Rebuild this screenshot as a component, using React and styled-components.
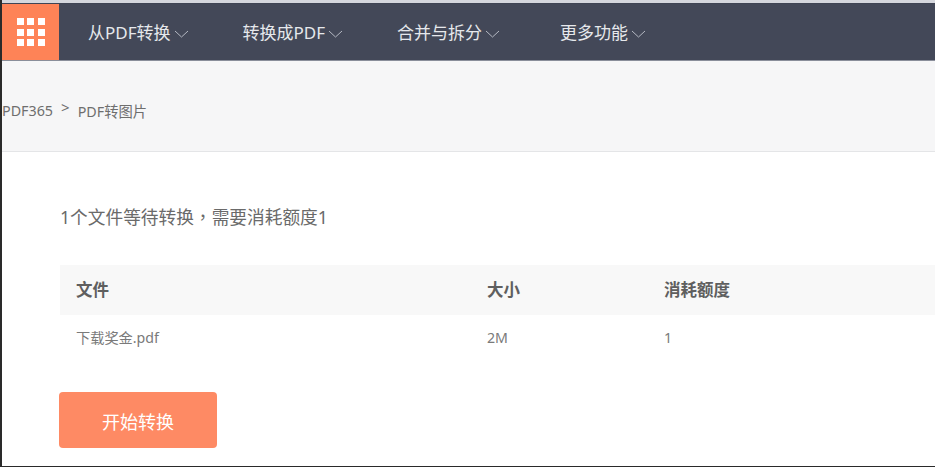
import React from 'react'
import styled, { createGlobalStyle } from 'styled-components'

const FONT = `"Noto Sans", "Noto Sans CJK SC", sans-serif`

const GlobalStyle = createGlobalStyle`
  html, body {
    margin: 0;
    padding: 0;
    background: #fff;
    overflow: hidden;
  }
  * {
    box-sizing: border-box;
  }
`

const Page = styled.div`
  width: 935px;
  height: 467px;
  padding-top: 3px;
  background: #fff;
  border-left: 2px solid #2a2a2a;
  border-bottom: 1px solid #2a2a2a;
  box-shadow: inset 0 3px 0 #d5d7dd;
  font-family: ${FONT};
  overflow: hidden;
`

const Nav = styled.nav`
  display: flex;
  height: 58px;
  background: #434858;
  border-top: 1px solid #3f4454;
  border-bottom: 1px solid #8a8e9a;
`

const AppsButton = styled.div`
  display: grid;
  grid-template-columns: repeat(3, 7px);
  grid-auto-rows: 7px;
  gap: 3.5px;
  align-content: center;
  justify-content: center;
  width: 57px;
  background: #fe8357;
`

const Dot = styled.span`
  background: #fff;
`

const NavItem = styled.div`
  display: flex;
  align-items: center;
  gap: 3px;
  margin-left: ${p => p.$left}px;
  padding-bottom: 2px;
  color: #e6e8ec;
  font-size: 17px;
  white-space: nowrap;
`

const Crumbs = styled.div`
  display: flex;
  align-items: center;
  height: 91px;
  padding-top: 8px;
  background: #f6f6f7;
  border-bottom: 1px solid #e4e5e7;
  color: #6e6e6e;
  font-size: 14.3px;
`

const CrumbSep = styled.span`
  margin: -7px 8px 0 8px;
  font-size: 15px;
`

const Content = styled.main`
  padding: 52px 0 0 58px;
`

const Summary = styled.div`
  height: 24px;
  margin-bottom: 37px;
  color: #6a6a6a;
  font-size: 17.7px;
  line-height: 24px;
`

const Comma = styled.span`
  font-family: "Noto Sans CJK TC", sans-serif;
`

const Row = styled.div`
  display: grid;
  grid-template-columns: 411px 177px 1fr;
  align-items: center;
  height: ${p => (p.$head ? 50 : 48)}px;
  padding: ${p => (p.$head ? '0 0 2px 16px' : '0 0 4px 16px')};
  background: ${p => (p.$head ? '#f8f8f8' : '#fff')};
  color: ${p => (p.$head ? '#5f5f5f' : '#7a7a7a')};
  font-size: ${p => (p.$head ? 16.5 : 14.2)}px;
  font-weight: ${p => (p.$head ? 700 : 400)};
`

const StartButton = styled.button`
  display: block;
  width: 158px;
  height: 56px;
  margin: 29px 0 0 -1px;
  padding: 2px 0 0;
  border: 0;
  border-radius: 4px;
  background: #fe8a64;
  color: #fff;
  font-family: ${FONT};
  font-size: 18px;
`

const Chevron = () => (
  <svg width='15' height='8' viewBox='0 0 15 8' fill='none' style={{ marginTop: 5 }}>
    <path d='M1 1l6.5 6 6.5-6' stroke='#b4b8c2' strokeWidth='1' />
  </svg>
)

const MENU = [
  { label: '从PDF转换', left: 29 },
  { label: '转换成PDF', left: 54 },
  { label: '合并与拆分', left: 54 },
  { label: '更多功能', left: 60 }
]

export default function App () {
  return (
    <Page>
      <GlobalStyle />
      <Nav>
        <AppsButton>
          {Array.from({ length: 9 }).map((_, i) => <Dot key={i} />)}
        </AppsButton>
        {MENU.map(item => (
          <NavItem key={item.label} $left={item.left}>
            {item.label}
            <Chevron />
          </NavItem>
        ))}
      </Nav>
      <Crumbs>
        PDF365
        <CrumbSep>&gt;</CrumbSep>
        PDF转图片
      </Crumbs>
      <Content>
        <Summary>1个文件等待转换<Comma>，</Comma>需要消耗额度1</Summary>
        <Row $head>
          <span>文件</span>
          <span>大小</span>
          <span>消耗额度</span>
        </Row>
        <Row>
          <span>下载奖金.pdf</span>
          <span>2M</span>
          <span>1</span>
        </Row>
        <StartButton>开始转换</StartButton>
      </Content>
    </Page>
  )
}
